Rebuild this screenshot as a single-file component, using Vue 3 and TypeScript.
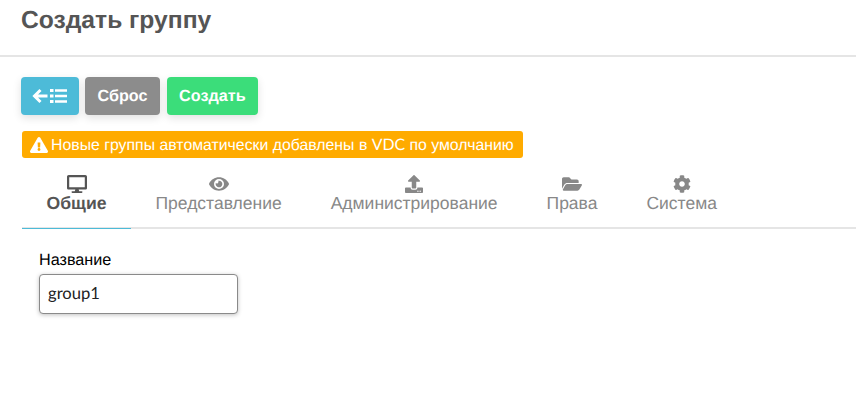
<script setup lang="ts">
interface Tab { label: string; icon: string; vb: string; active?: boolean }
const tabs: Tab[] = [
  { label: 'Общие', active: true, vb: '0 0 576 512', icon: 'M528 0H48C21.5 0 0 21.5 0 48v320c0 26.5 21.5 48 48 48h192l-16 48h-72c-13.3 0-24 10.7-24 24s10.7 24 24 24h272c13.3 0 24-10.7 24-24s-10.7-24-24-24h-72l-16-48h192c26.5 0 48-21.5 48-48V48c0-26.5-21.5-48-48-48zm-16 352H64V64h448v288z' },
  { label: 'Представление', vb: '0 0 576 512', icon: 'M572.52 241.4C518.29 135.59 410.93 64 288 64S57.68 135.64 3.48 241.41a32.35 32.35 0 0 0 0 29.19C57.71 376.41 165.07 448 288 448s230.32-71.64 284.52-177.41a32.35 32.35 0 0 0 0-29.19zM288 400a144 144 0 1 1 144-144 143.93 143.93 0 0 1-144 144zm0-240a95.31 95.31 0 0 0-25.31 3.79 47.85 47.85 0 0 1-66.9 66.9A95.78 95.78 0 1 0 288 160z' },
  { label: 'Администрирование', vb: '0 0 512 512', icon: 'M296 384h-80c-13.3 0-24-10.7-24-24V192h-87.7c-17.8 0-26.7-21.5-14.1-34.1L242.3 5.7c7.5-7.5 19.8-7.5 27.3 0l152.2 152.2c12.6 12.6 3.7 34.1-14.1 34.1H320v168c0 13.3-10.7 24-24 24zm216-8v112c0 13.3-10.7 24-24 24H24c-13.3 0-24-10.7-24-24V376c0-13.3 10.7-24 24-24h136v8c0 30.9 25.1 56 56 56h80c30.9 0 56-25.1 56-56v-8h136c13.3 0 24 10.7 24 24zm-124 88c0-11-9-20-20-20s-20 9-20 20 9 20 20 20 20-9 20-20zm64 0c0-11-9-20-20-20s-20 9-20 20 9 20 20 20 20-9 20-20z' },
  { label: 'Права', vb: '0 0 576 512', icon: 'M572.694 292.093L500.27 416.248A63.997 63.997 0 0 1 444.989 448H45.025c-18.523 0-30.064-20.093-20.731-36.093l72.424-124.155A64 64 0 0 1 152 256h399.964c18.523 0 30.064 20.093 20.73 36.093zM152 224h328v-48c0-26.51-21.49-48-48-48H272l-64-64H48C21.49 64 0 85.49 0 112v278.046l69.077-118.418C86.214 242.25 117.989 224 152 224z' },
  { label: 'Система', vb: '0 0 512 512', icon: 'M487.4 315.7l-42.6-24.6c4.3-23.2 4.3-47 0-70.2l42.6-24.6c4.9-2.8 7.1-8.6 5.5-14-11.1-35.6-30-67.8-54.7-94.6-3.8-4.1-10-5.1-14.8-2.3L380.8 110c-17.9-15.4-38.5-27.3-60.8-35.1V25.8c0-5.6-3.9-10.5-9.4-11.7-36.7-8.2-74.3-7.8-109.2 0-5.5 1.2-9.4 6.1-9.4 11.7V75c-22.2 7.9-42.8 19.8-60.8 35.1L88.7 85.5c-4.9-2.8-11-1.9-14.8 2.3-24.7 26.7-43.6 58.9-54.7 94.6-1.7 5.4.6 11.2 5.5 14L67.3 221c-4.3 23.2-4.3 47 0 70.2l-42.6 24.6c-4.9 2.8-7.1 8.6-5.5 14 11.1 35.6 30 67.8 54.7 94.6 3.8 4.1 10 5.1 14.8 2.3l42.6-24.6c17.9 15.4 38.5 27.3 60.8 35.1v49.2c0 5.6 3.9 10.5 9.4 11.7 36.7 8.2 74.3 7.8 109.2 0 5.5-1.2 9.4-6.1 9.4-11.7v-49.2c22.2-7.9 42.8-19.8 60.8-35.1l42.6 24.6c4.9 2.8 11 1.9 14.8-2.3 24.7-26.7 43.6-58.9 54.7-94.6 1.5-5.5-.7-11.3-5.6-14.1zM256 336c-44.1 0-80-35.9-80-80s35.9-80 80-80 80 35.9 80 80-35.9 80-80 80z' }
]
</script>

<template>
  <div class="page">
    <header class="head"><h1>Создать группу</h1></header>
    <div class="actions">
      <button class="btn blue" type="button" aria-label="Назад">
        <svg class="back" viewBox="0 0 36 16" width="36" height="16">
          <path d="M8.500 2 2.500 8 8.500 14M3 8h12.500" fill="none" stroke="#fff" stroke-width="3"/>
          <path d="M18 1h3.500v3H18zM18 6.500h3.500v3H18zM18 12h3.500v3H18zM23 1.300h12v2.400H23zM23 6.800h12v2.400H23zM23 12.300h12v2.400H23z" fill="#fff"/>
        </svg>
      </button>
      <button class="btn grey" type="button">Сброс</button>
      <button class="btn green" type="button">Создать</button>
    </div>
    <div class="warn-row">
      <span class="warn">
        <svg viewBox="0 0 576 512" width="18" height="16"><path fill="#fff" d="M569.517 440.013C587.975 472.007 564.806 512 527.94 512H48.054c-36.937 0-59.999-40.055-41.577-71.987L246.423 23.985c18.467-32.009 64.72-31.951 83.154 0l239.94 416.028zM288 354c-25.405 0-46 20.595-46 46s20.595 46 46 46 46-20.595 46-46-20.595-46-46-46zm-43.673-165.346l7.418 136c.347 6.364 5.609 11.346 11.982 11.346h48.546c6.373 0 11.635-4.982 11.982-11.346l7.418-136c.375-6.874-5.098-12.654-11.982-12.654h-63.383c-6.884 0-12.356 5.78-11.981 12.654z"/></svg>
        <span>Новые группы автоматически добавлены в <span class="lat">VDC</span> по умолчанию</span>
      </span>
    </div>
    <nav class="tabs">
      <a v-for="t in tabs" :key="t.label" class="tab" :class="{ active: t.active }">
        <svg class="ico" :viewBox="t.vb" width="20" height="18"><path fill="currentColor" :d="t.icon"/></svg>
        <span>{{ t.label }}</span>
      </a>
    </nav>
    <form class="form" @submit.prevent>
      <label for="name">Название</label>
      <input id="name" value="group1" />
    </form>
  </div>
</template>

<style>
html, body { margin: 0; background: #fff; }
</style>

<style scoped>
.page { width: 856px; height: 403px; overflow: hidden; background: #fff; font-family: "Liberation Sans", sans-serif; text-rendering: geometricPrecision; }
.head { height: 55px; border-bottom: 2px solid #e5e5e5; }
h1 { margin: 0; padding: 6px 0 0 21px; font-size: 24.640px; line-height: 30px; font-weight: 700; color: #555; }
.actions { display: flex; gap: 6px; padding: 20px 0 0 21px; }
.btn { height: 38px; border: 0; border-radius: 4px; padding: 0 12.500px; font: 700 16.200px "Liberation Sans", sans-serif; text-rendering: geometricPrecision; color: #fff; box-shadow: 0 3px 8px rgba(0,0,0,.12); display: flex; align-items: center; }
.blue { background: #4dbbd8; width: 58px; justify-content: center; padding: 0; }
.grey { background: #8c8c8c; }
.green { background: #3bdd7a; margin-left: 1px; padding: 0 12px; }
.warn-row { padding: 16px 0 0 22px; display: flex; }
.warn { display: flex; align-items: center; gap: 3px; height: 27px; padding: 0 9px 0 8px; border-radius: 3px; background: #ffab00; color: #fff; font-size: 15.840px; white-space: nowrap; }
.lat { font-family: Lato, sans-serif; }
.tabs { display: flex; margin: 10px 0 0 22px; border-bottom: 2px solid #e5e5e5; height: 59px; }
.tab { position: relative; padding: 7px 24.500px 0; display: flex; flex-direction: column; align-items: center; font-size: 17.500px; color: #888; line-height: 22px; }
.ico { margin-bottom: -1px; }
.tab.active { color: #555; font-weight: 700; font-size: 17.600px; }
.tab.active::after { content: ""; position: absolute; left: 0; right: 0; bottom: -2px; height: 1px; background: #4dbbd8; }
.form { padding: 19px 0 0 39px; display: flex; flex-direction: column; align-items: flex-start; }
label { font-size: 16.200px; line-height: 24px; color: #000; margin-bottom: 2px; }
input { box-sizing: border-box; width: 199px; height: 40px; padding: 0 8px 2px; border: 1px solid #8a8a8a; border-radius: 4px; font: 16.600px Lato, sans-serif; text-rendering: geometricPrecision; color: #222; box-shadow: 0 1px 4px rgba(0,0,0,.25); outline: none; }
</style>
